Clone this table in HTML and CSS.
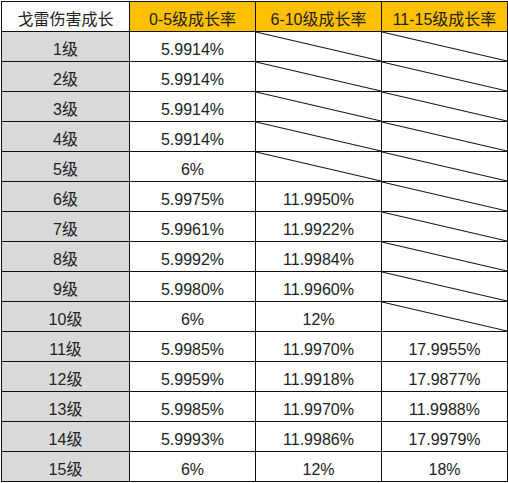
FILE: index.html
```html
<!DOCTYPE html>
<html lang="zh-CN">
<head>
<meta charset="utf-8">
<title>戈雷伤害成长</title>
<link rel="stylesheet" href="styles.css">
</head>
<body>
<div class="sheet">
  <div class="c head-plain">戈雷伤害成长</div>
  <div class="c head">0-5级成长率</div>
  <div class="c head">6-10级成长率</div>
  <div class="c head">11-15级成长率</div>

  <div class="c lvl">1级</div><div class="c">5.9914%</div><div class="c x"></div><div class="c x"></div>
  <div class="c lvl">2级</div><div class="c">5.9914%</div><div class="c x"></div><div class="c x"></div>
  <div class="c lvl">3级</div><div class="c">5.9914%</div><div class="c x"></div><div class="c x"></div>
  <div class="c lvl">4级</div><div class="c">5.9914%</div><div class="c x"></div><div class="c x"></div>
  <div class="c lvl">5级</div><div class="c">6%</div><div class="c x"></div><div class="c x"></div>
  <div class="c lvl">6级</div><div class="c">5.9975%</div><div class="c">11.9950%</div><div class="c x"></div>
  <div class="c lvl">7级</div><div class="c">5.9961%</div><div class="c">11.9922%</div><div class="c x"></div>
  <div class="c lvl">8级</div><div class="c">5.9992%</div><div class="c">11.9984%</div><div class="c x"></div>
  <div class="c lvl">9级</div><div class="c">5.9980%</div><div class="c">11.9960%</div><div class="c x"></div>
  <div class="c lvl">10级</div><div class="c">6%</div><div class="c">12%</div><div class="c x"></div>
  <div class="c lvl">11级</div><div class="c">5.9985%</div><div class="c">11.9970%</div><div class="c">17.9955%</div>
  <div class="c lvl">12级</div><div class="c">5.9959%</div><div class="c">11.9918%</div><div class="c">17.9877%</div>
  <div class="c lvl">13级</div><div class="c">5.9985%</div><div class="c">11.9970%</div><div class="c">11.9988%</div>
  <div class="c lvl">14级</div><div class="c">5.9993%</div><div class="c">11.9986%</div><div class="c">17.9979%</div>
  <div class="c lvl">15级</div><div class="c">6%</div><div class="c">12%</div><div class="c">18%</div>
</div>
</body>
</html>
```
FILE: styles.css
```css
html, body {
  margin: 0;
  padding: 0;
  background: #fff;
}
.sheet {
  margin: 1px 0 0 1px;
  display: grid;
  grid-template-columns: 127px 125px 125px 125px;
  grid-template-rows: repeat(16, 29px);
  gap: 1px;
  padding: 1px;
  width: 505px;
  background: #111;
  font-family: "Liberation Sans", Arial, "Noto Sans CJK SC", sans-serif;
  font-size: 16px;
  color: #222;
}
.c {
  background: #fff;
  text-align: center;
  line-height: 23px;
  padding-top: 6px;
  white-space: nowrap;
  overflow: hidden;
}
.head {
  background: #ffc000;
}
.head-plain {
  background: #fff;
}
.lvl {
  background: #d9d9d9;
}
.x {
  background: linear-gradient(to top right, #fff calc(50% - 1px), #111 50%, #fff calc(50% + 1px));
}
```
